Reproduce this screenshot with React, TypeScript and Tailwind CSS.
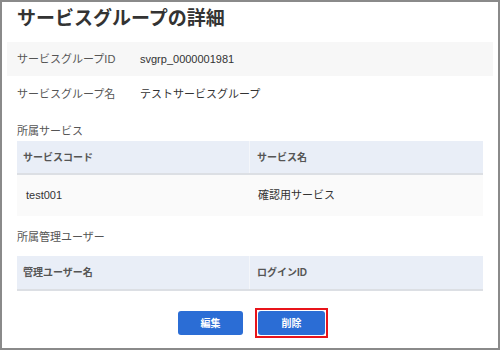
export default function App() {
  return (
    <div
      className="w-[500px] h-[350px] box-border border-2 border-[#8a8a8a] bg-white px-[5px] text-[#333]"
      style={{ fontFamily: '"Liberation Sans", "Noto Sans CJK JP", sans-serif' }}
    >
      <h1 className="pt-[3px] mb-[9px] pl-[10px] text-[19px] leading-[28px] font-bold text-[#333]">
        サービスグループの詳細
      </h1>

      <div className="flex items-center h-[34px] bg-[#f7f7f7] pl-[10px] text-[11px]">
        <div className="w-[123px] text-[#555]">サービスグループID</div>
        <div>svgrp_0000001981</div>
      </div>
      <div className="flex items-center h-[36px] pl-[10px] text-[11px]">
        <div className="w-[123px] text-[#555]">サービスグループ名</div>
        <div>テストサービスグループ</div>
      </div>

      <div className="mx-[10px]">
        <div className="mt-[10px] text-[11px] leading-[19px] text-[#555]">所属サービス</div>
        <div className="text-[10px]">
          <div className="grid grid-cols-[233px_1fr] h-[34px] bg-[#e9eef7] border-b-2 border-[#dcdfe4] font-bold text-[#555]">
            <div className="flex items-center pl-[6px] border-r border-[#f4f6fa]">サービスコード</div>
            <div className="flex items-center pl-[7px]">サービス名</div>
          </div>
          <div className="grid grid-cols-[233px_1fr] h-[41px] bg-[#fafafa] text-[11px] text-[#333]">
            <div className="flex items-center pl-[9px]">test001</div>
            <div className="flex items-center pl-[8px]">確認用サービス</div>
          </div>
        </div>

        <div className="mt-[12px] mb-[9px] text-[11px] leading-[19px] text-[#555]">所属管理ユーザー</div>
        <div className="text-[10px]">
          <div className="grid grid-cols-[233px_1fr] h-[35px] bg-[#e9eef7] border-b-2 border-[#dcdfe4] font-bold text-[#555]">
            <div className="flex items-center pl-[6px] border-r border-[#f4f6fa]">管理ユーザー名</div>
            <div className="flex items-center pl-[7px]">ログインID</div>
          </div>
        </div>
      </div>

      <div className="flex justify-center items-center gap-[12px] mt-[17px] pl-[6px]">
        <button className="w-[65px] h-[24px] rounded-[3px] bg-[#2b6dd5] text-white text-[10px] font-semibold">
          編集
        </button>
        <span className="flex border-2 border-[#e8141a] p-[1px]">
          <button className="w-[67px] h-[24px] rounded-[3px] bg-[#2b6dd5] text-white text-[10px] font-semibold">
            削除
          </button>
        </span>
      </div>
    </div>
  )
}
